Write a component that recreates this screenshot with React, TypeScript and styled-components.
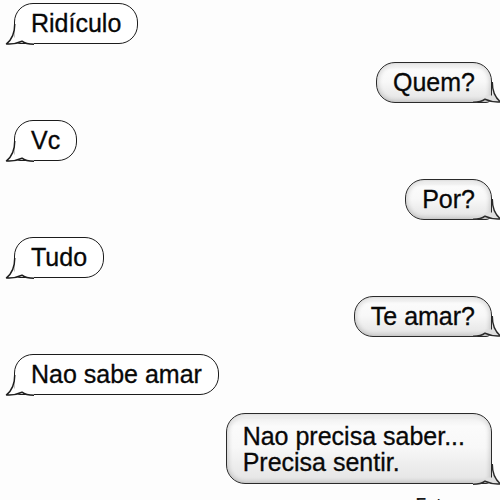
import React from 'react';
import styled, { createGlobalStyle, css } from 'styled-components';

const Global = createGlobalStyle`
  html, body { margin: 0; padding: 0; background: #ffffff; }
  body { font-family: "Liberation Sans", Arial, Helvetica, sans-serif; }
`;

const Thread = styled.div`
  box-sizing: border-box;
  width: 500px;
  height: 500px;
  overflow: hidden;
  display: flex;
  flex-direction: column;
  gap: 17.5px;
  padding: 3px 8px 0 14px;
  background: #fdfdfd;
`;

const Row = styled.div<{ $out?: boolean }>`
  display: flex;
  justify-content: ${(p) => (p.$out ? 'flex-end' : 'flex-start')};
`;

const Bubble = styled.div<{ $out?: boolean; $multi?: boolean }>`
  position: relative;
  box-sizing: border-box;
  min-height: 41px;
  padding: ${(p) => (p.$multi ? '9px 26px 8.5px 16px' : '6px 16px 7px')};
  border: 1.5px solid #1c1c1c;
  border-radius: 19px;
  ${(p) => (p.$out ? 'border-bottom-right-radius: 6px;' : 'border-bottom-left-radius: 6px;')}
  font-size: 25px;
  line-height: 26px;
  color: #080808;
  -webkit-text-stroke: 0.3px #080808;
  white-space: nowrap;
  background: #ffffff;
  ${(p) =>
    p.$out &&
    css`
      border-color: #2a2a2a;
      background: linear-gradient(
        to bottom,
        #ececec 0%,
        #fbfbfb 18%,
        #f8f8f8 48%,
        #eeeeee 72%,
        #e4e4e4 100%
      );
      box-shadow: inset 0 0 5px 1px rgba(0, 0, 0, 0.2),
        inset 0 3px 2px rgba(255, 255, 255, 0.95);
    `}
`;

const TailSvg = styled.svg<{ $out?: boolean }>`
  position: absolute;
  bottom: -1.5px;
  width: 30px;
  height: 26px;
  overflow: visible;
  ${(p) =>
    p.$out
      ? css`
          right: -10.5px;
          transform: scaleX(-1);
        `
      : css`
          left: -10.5px;
        `}
`;

const Status = styled.div`
  margin-top: -6px;
  padding-right: 7px;
  display: flex;
  justify-content: flex-end;
  font-size: 16px;
  font-weight: bold;
  line-height: 18px;
  color: #1a1a1a;
`;

const tailOutline =
  'M 9.75 5 C 9.75 13.5, 7.5 20, 1.5 24.9 C 6 25.3, 12.5 24.2, 17 22.2 C 20 24.6, 24 25.25, 29 25.25';

const Tail = ({ out }: { out?: boolean }) => (
  <TailSvg $out={out} viewBox="0 0 30 26">
    <path
      d={`${tailOutline} L 29 23.6 L 16.5 23.6 L 16.5 18.5 L 9.75 18.5 Z`}
      fill={out ? '#e0e0e0' : '#ffffff'}
      stroke="none"
    />
    <path
      d={tailOutline}
      fill="none"
      stroke={out ? '#2a2a2a' : '#1c1c1c'}
      strokeWidth={1.5}
      strokeLinejoin="round"
    />
  </TailSvg>
);

type Msg = { text: string[]; out?: boolean };

const messages: Msg[] = [
  { text: ['Ridículo'] },
  { text: ['Quem?'], out: true },
  { text: ['Vc'] },
  { text: ['Por?'], out: true },
  { text: ['Tudo'] },
  { text: ['Te amar?'], out: true },
  { text: ['Nao sabe amar'] },
  { text: ['Nao precisa saber...', 'Precisa sentir.'], out: true },
];

export default function App() {
  return (
    <>
      <Global />
      <Thread>
        {messages.map((m, i) => (
          <Row key={i} $out={m.out}>
            <Bubble $out={m.out} $multi={m.text.length > 1}>
              {m.text.map((line, j) => (
                <div key={j}>{line}</div>
              ))}
              <Tail out={m.out} />
            </Bubble>
          </Row>
        ))}
        <Status>Entregue</Status>
      </Thread>
    </>
  );
}
